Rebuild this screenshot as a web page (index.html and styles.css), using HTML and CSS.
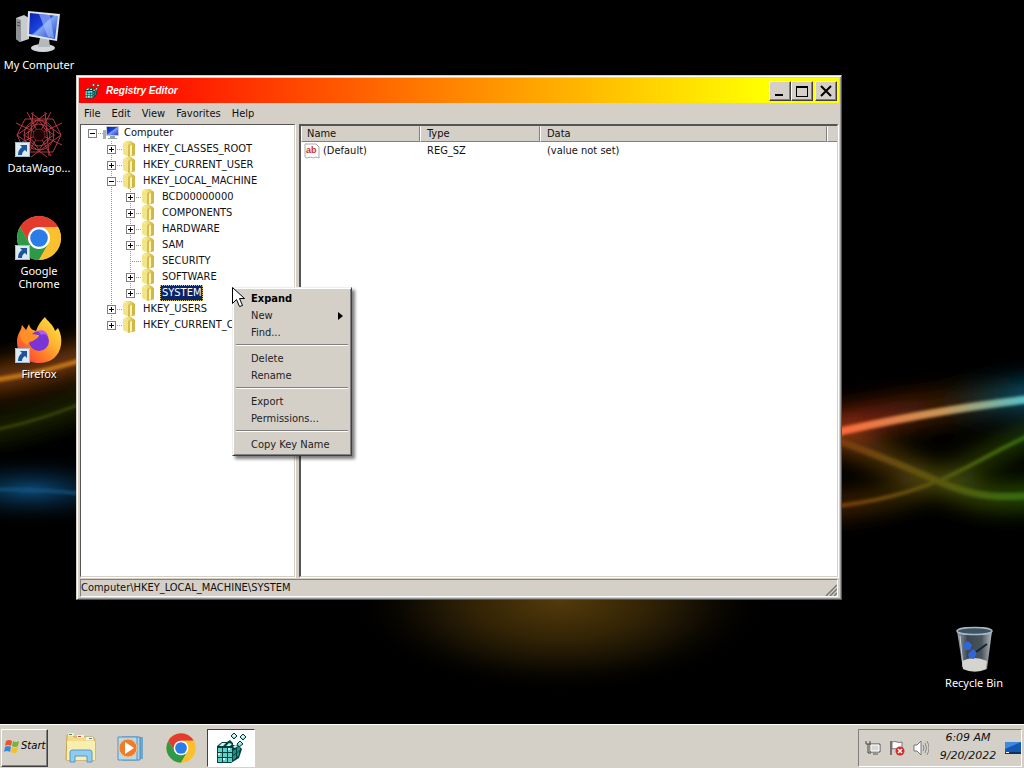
FILE: index.html
```html
<!DOCTYPE html>
<html lang="en">
<head>
	<meta charset="utf-8">
	<title>Registry Editor</title>
	<link rel="stylesheet" href="styles.css">
</head>
<body>

	<!-- shared drawings -->
	<svg class="defs" width="0" height="0">
		<defs>
			<linearGradient id="gold"><stop offset="0" stop-color="#fff6a8"/><stop offset=".5" stop-color="#f0dc6e"/><stop offset="1" stop-color="#c9a936"/></linearGradient>
			<linearGradient id="blue" x2="1" y2="1"><stop offset="0" stop-color="#0a1fae"/><stop offset=".45" stop-color="#1c43e0"/><stop offset=".5" stop-color="#7fa4f5"/><stop offset="1" stop-color="#1a3fd0"/></linearGradient>
			<linearGradient id="flame" x1="1" x2="0" y2="1"><stop offset="0" stop-color="#fff04a"/><stop offset=".4" stop-color="#ffb02e"/><stop offset=".7" stop-color="#ff6a2a"/><stop offset="1" stop-color="#f0256a"/></linearGradient>
			<linearGradient id="glass"><stop offset="0" stop-color="#9aa4ac"/><stop offset=".3" stop-color="#3c464e"/><stop offset=".7" stop-color="#4a545c"/><stop offset="1" stop-color="#b4bcc2"/></linearGradient>
		</defs>
		<symbol id="folder" viewBox="0 0 16 16">
			<path d="M1 2l2-2h6l4 3v11l-6 2-6-3z" fill="url(#gold)"/>
			<path d="M1 2l5 2v11l-5-2z" fill="#f3e48c"/>
			<path d="M6 4l2-1v12l-2 1z" fill="#d8bd4e"/>
			<path d="M8 5l2-1v10l-2 1z" fill="#fff6b4"/>
			<path d="M10 4l3-1v11l-3 1z" fill="#d3b648"/>
		</symbol>
		<symbol id="chrome" viewBox="0 0 48 48">
			<circle cx="24" cy="24" r="22" fill="#fbc02d"/>
			<path d="M5 13A22 22 0 0 1 43.100 13H24L14.500 29.500z" fill="#e33b2e"/>
			<path d="M5 13A22 22 0 0 0 24 46L33.500 29.500H14.500z" fill="#2e9a47"/>
			<path d="M24 13h19A22 22 0 0 1 24 46l9.500-16.500z" fill="#fbc02d"/>
			<circle cx="24" cy="24" r="11" fill="#fff"/>
			<circle cx="24" cy="24" r="8.800" fill="#2a7de9"/>
		</symbol>
		<symbol id="shortcut" viewBox="0 0 15 15">
			<path d="M0 0h15v15H0z" fill="#dde9f3"/>
			<path d="M.5.5h14v14H.5z" fill="none" stroke="#a9b9c8"/>
			<path d="M5 3h7v7l-2-2c-2 1-3 3-3 5H3c0-3 1-6 4-8z" fill="#1d549c"/>
		</symbol>
		<symbol id="regedit" viewBox="0 0 32 32">
			<path d="M2 14l5-4h5l3-2 3 3v2h5l4 4-3 9-8 5H2z" fill="#08403e"/>
			<g fill="#5fd0c8">
				<path d="M3 16h4v4H3zM8 16h4v4H8zM13 16h4v4h-4zM3 21h4v4H3zM8 21h4v4H8zM13 21h4v4h-4zM3 26h4v4H3zM8 26h4v4H8zM13 26h4v4h-4z"/>
				<path d="M18 19l3-2v4l-3 2zM22 16l3-2v4l-3 2zM18 24l3-2v4l-3 2zM22 21l2-2v4l-2 2z" fill="#1f8f88"/>
			</g>
			<g fill="#c8f5f0"><path d="M4 14l3-3h4l-3 3zM11 14l3-3 3 1-2 2zM3 21h2v2H3zM8 26h2v2H8zM13 16h2v2h-2zM18 15l2-2 3 1-3 2z"/></g>
			<g stroke="#063634" stroke-width="1" fill="#7fe0d8">
				<path d="M19 1l3 3-3 3-3-3zM28 2l3 3-3 3-3-3zM25 9l3 3-4 3-2-3z"/>
			</g>
			<path d="M19 2l2 2-2 1-2-1zM28 3l2 2-2 1-2-1zM25 10l1 1-2 1z" fill="#e4fffc"/>
		</symbol>
		<symbol id="monitor" viewBox="0 0 16 16">
			<path d="M0 5h3v9H0z" fill="#a8adb2"/>
			<path d="M3 1h13v10H3z" fill="#c5cad2"/>
			<path d="M4 2h11v8H4z" fill="url(#blue)"/>
			<path d="M7 11h5v2h2v1H5v-1h2z" fill="#9aa0a8"/>
		</symbol>
	</svg>

	<main class="desktop">
		<svg class="wallpaper" viewBox="0 0 1024 724" preserveAspectRatio="none">
			<defs>
				<filter id="soft" x="-20%" y="-80%" width="140%" height="260%"><feGaussianBlur stdDeviation="12"/></filter>
				<filter id="fine" x="-20%" y="-50%" width="140%" height="200%"><feGaussianBlur stdDeviation="1.500"/></filter>
				<radialGradient id="amber"><stop offset="0" stop-color="#543a0a"/><stop offset=".4" stop-color="#332406"/><stop offset=".7" stop-color="#120d03"/><stop offset="1" stop-color="#000" stop-opacity="0"/></radialGradient>
				<radialGradient id="navy"><stop offset="0" stop-color="#0b4a78"/><stop offset="1" stop-color="#000" stop-opacity="0"/></radialGradient>
				<linearGradient id="ray" gradientUnits="userSpaceOnUse" x1="842" x2="1024"><stop offset="0" stop-color="#fb6a3c"/><stop offset=".55" stop-color="#c79555"/><stop offset="1" stop-color="#58bfc4"/></linearGradient>
				<linearGradient id="rayglow" gradientUnits="userSpaceOnUse" x1="842" x2="1024"><stop offset="0" stop-color="#a02a08"/><stop offset=".6" stop-color="#3a2206"/><stop offset="1" stop-color="#065a74"/></linearGradient>
				<linearGradient id="moss" gradientUnits="userSpaceOnUse" x1="842" x2="1024"><stop offset="0" stop-color="#7a3c08"/><stop offset=".5" stop-color="#5c5608"/><stop offset="1" stop-color="#346c0a"/></linearGradient>
			</defs>
			<path d="M0 0h1024v724H0z"/>
			<ellipse cx="560" cy="600" rx="210" ry="95" fill="url(#amber)"/>
			<ellipse cx="30" cy="490" rx="130" ry="38" fill="url(#navy)"/>
			<g fill="none">
				<g filter="url(#soft)">
					<path d="M-20 382Q40 372 100 352" stroke="#8a4408" stroke-width="24"/>
					<path d="M-20 432Q40 422 100 396" stroke="#2c3806" stroke-width="16"/>
					<path d="M820 430Q940 404 1050 392" stroke="url(#rayglow)" stroke-width="26"/>
					<path d="M820 432C880 455 900 465 940 482S1000 500 1050 494" stroke="url(#moss)" stroke-width="18"/>
					<path d="M820 508C880 502 910 492 940 480S990 452 1050 426" stroke="url(#moss)" stroke-width="12"/>
				</g>
				<g filter="url(#fine)">
					<path d="M-20 382Q40 375 100 354" stroke="#c27414" stroke-width="5"/>
					<path d="M-20 433Q40 422 100 396" stroke="#465010" stroke-width="2"/>
					<path d="M-20 490Q40 488 100 496" stroke="#125078" stroke-width="3"/>
					<path d="M820 436Q940 408 1050 397" stroke="url(#ray)" stroke-width="8"/>
					<path d="M820 434C880 455 900 465 940 482S1000 498 1050 495" stroke="url(#moss)" stroke-width="7"/>
					<path d="M820 508C880 502 910 492 940 480S990 452 1050 426" stroke="url(#moss)" stroke-width="4"/>
				</g>
			</g>
		</svg>

		<div class="icons">
			<button class="shortcut">
				<svg viewBox="0 0 48 48">
					<path d="M1 10l8-3 5 3v21l-9 3-4-3z" fill="#c9cccd"/>
					<path d="M1 10l5 2v22l-5-3z" fill="#8e9294"/>
					<path d="M2 14l3 1M2 17l3 1" stroke="#444"/>
					<ellipse cx="28" cy="40" rx="12" ry="4" fill="#d4d7d9"/>
					<path d="M25 30h9l1 9H23z" fill="#b4b9bc"/>
					<path d="M13 3l32 3-3 27-30-5z" fill="#dfe3e6"/>
					<path d="M15 5l28 3-3 23-26-5z" fill="url(#blue)"/>
					<path d="M24 6l11 1 4 23-6-1z" fill="#a9c3fb" opacity=".6"/>
				</svg>
				<span>My Computer</span>
			</button>
			<button class="shortcut">
				<svg viewBox="0 0 48 48">
					<g fill="none" stroke="#b23a42" stroke-width="1">
						<path d="M12 1l24 44M36 1L12 45M1 12l46 22M1 34l46-22M18 1l-4 44M30 1l4 44M2 24l30-22M2 24l30 22M46 24L16 2M46 24L16 46"/>
						<path d="M10 8h28l8 16-8 17H10L2 24z"/>
						<circle cx="24" cy="24" r="11"/><circle cx="24" cy="24" r="15"/>
						<path d="M24 9l6 9 9 6-9 6-6 9-6-9-9-6 9-6z"/>
					</g>
					<circle cx="24" cy="24" r="6" fill="#1c0406" stroke="#7c2026"/>
					<use href="#shortcut" x="0" y="31" width="15" height="15"/>
				</svg>
				<span>DataWago...</span>
			</button>
			<button class="shortcut">
				<svg viewBox="0 0 48 48">
					<use href="#chrome" width="48" height="48"/>
					<use href="#shortcut" x="0" y="31" width="15" height="15"/>
				</svg>
				<span>Google Chrome</span>
			</button>
			<button class="shortcut">
				<svg viewBox="0 0 48 48">
					<path d="M30 0c2 4 8 7 10 14l3-3c4 7 4 15 2 21-3 9-11 14-21 14C11 46 2 37 2 25c0-6 2-9 4-13l1-4 4 5 3-6c1 4 3 6 7 7 2-6 5-10 9-14z" fill="url(#flame)"/>
					<circle cx="24" cy="24" r="10" fill="#7a35d8"/>
					<path d="M23 14c5-2 9 1 10 5-3-2-6-2-7-1z" fill="#b05cf0"/>
					<path d="M5 15c5-3 9-1 12 2l7 1c0 3-4 4-6 6-3 1-5 1-6 4-4-2-7-6-7-13z" fill="#ff8f26"/>
					<use href="#shortcut" x="0" y="31" width="15" height="15"/>
				</svg>
				<span>Firefox</span>
			</button>
		</div>

		<button class="shortcut bin">
			<svg viewBox="0 0 48 48">
				<path d="M7 5h35l-5 38q-12 6-24 0z" fill="url(#glass)"/>
				<ellipse cx="24.500" cy="5" rx="17.500" ry="3.500" fill="#3d5262" stroke="#a9b8c2" stroke-width="1.500"/>
				<path d="M12 35q12-6 25 0l-1 8q-11 5-23 0z" fill="#d5d5d0"/>
				<path d="M13 18l5-3 4 4-2 5h-5zM18 28l5-5 4 4-3 6-5-1z" fill="#2f66d8"/>
				<path d="M26 26l11-8" stroke="#18222c" stroke-width="2"/>
				<path d="M10 10l3 31" stroke="#c7d0d6" stroke-width="1"/>
			</svg>
			<span>Recycle Bin</span>
		</button>

		<section class="window">
			<header class="titlebar">
				<svg class="icon16"><use href="#regedit"/></svg>
				<h1>Registry Editor</h1>
				<button class="caption" aria-label="Minimize"><svg viewBox="0 0 14 12"><path d="M2 9h8v2H2z"/></svg></button>
				<button class="caption" aria-label="Maximize"><svg viewBox="0 0 14 12"><path d="M1 1h12v11H1zM2 3v8h10V3z" fill-rule="evenodd"/></svg></button>
				<button class="caption close" aria-label="Close"><svg viewBox="0 0 14 12"><path d="M2 1l10 10M12 1L2 11" stroke="#000" stroke-width="2"/></svg></button>
			</header>

			<nav class="menubar">
				<button>File</button>
				<button>Edit</button>
				<button>View</button>
				<button>Favorites</button>
				<button>Help</button>
			</nav>

			<div class="panes">
				<div class="pane tree-pane">
					<ul class="tree">
						<li>
							<div class="node"><span class="joint"><button class="toggle open" aria-label="Collapse"></button></span><svg class="icon16"><use href="#monitor"/></svg><span class="name">Computer</span></div>
							<ul>
								<li><div class="node"><span class="joint"><button class="toggle" aria-label="Expand"></button></span><svg class="icon16"><use href="#folder"/></svg><span class="name">HKEY_CLASSES_ROOT</span></div></li>
								<li><div class="node"><span class="joint"><button class="toggle" aria-label="Expand"></button></span><svg class="icon16"><use href="#folder"/></svg><span class="name">HKEY_CURRENT_USER</span></div></li>
								<li>
									<div class="node"><span class="joint"><button class="toggle open" aria-label="Collapse"></button></span><svg class="icon16"><use href="#folder"/></svg><span class="name">HKEY_LOCAL_MACHINE</span></div>
									<ul>
										<li><div class="node"><span class="joint"><button class="toggle" aria-label="Expand"></button></span><svg class="icon16"><use href="#folder"/></svg><span class="name">BCD00000000</span></div></li>
										<li><div class="node"><span class="joint"><button class="toggle" aria-label="Expand"></button></span><svg class="icon16"><use href="#folder"/></svg><span class="name">COMPONENTS</span></div></li>
										<li><div class="node"><span class="joint"><button class="toggle" aria-label="Expand"></button></span><svg class="icon16"><use href="#folder"/></svg><span class="name">HARDWARE</span></div></li>
										<li><div class="node"><span class="joint"><button class="toggle" aria-label="Expand"></button></span><svg class="icon16"><use href="#folder"/></svg><span class="name">SAM</span></div></li>
										<li><div class="node"><span class="joint"></span><svg class="icon16"><use href="#folder"/></svg><span class="name">SECURITY</span></div></li>
										<li><div class="node"><span class="joint"><button class="toggle" aria-label="Expand"></button></span><svg class="icon16"><use href="#folder"/></svg><span class="name">SOFTWARE</span></div></li>
										<li><div class="node"><span class="joint"><button class="toggle" aria-label="Expand"></button></span><svg class="icon16"><use href="#folder"/></svg><span class="name selected">SYSTEM</span></div></li>
									</ul>
								</li>
								<li><div class="node"><span class="joint"><button class="toggle" aria-label="Expand"></button></span><svg class="icon16"><use href="#folder"/></svg><span class="name">HKEY_USERS</span></div></li>
								<li><div class="node"><span class="joint"><button class="toggle" aria-label="Expand"></button></span><svg class="icon16"><use href="#folder"/></svg><span class="name">HKEY_CURRENT_CONFIG</span></div></li>
							</ul>
						</li>
					</ul>
				</div>

				<div class="pane values-pane">
					<table class="values">
						<thead>
							<tr><th class="col-name">Name</th><th class="col-type">Type</th><th>Data</th><th class="col-rest"></th></tr>
						</thead>
						<tbody>
							<tr>
								<td><span class="value"><svg class="icon16" viewBox="0 0 16 16"><path d="M1 1h11l3 3v11l-3-1-3 1-3-1-3 1-2-1z" fill="#fff" stroke="#aaa"/><text x="2" y="10" class="ab">ab</text></svg>(Default)</span></td>
								<td>REG_SZ</td>
								<td>(value not set)</td>
								<td></td>
							</tr>
						</tbody>
					</table>
				</div>
			</div>

			<footer class="status">
				<span>Computer\HKEY_LOCAL_MACHINE\SYSTEM</span>
				<svg class="grip" viewBox="0 0 12 12"><path d="M1 12L12 1M5 12l7-7M9 12l3-3" stroke="#777" stroke-width="1.500"/></svg>
			</footer>
		</section>

		<div class="context">
			<button class="default">Expand</button>
			<button>New<svg viewBox="0 0 5 8"><path d="M0 0l5 4-5 4z"/></svg></button>
			<button>Find...</button>
			<hr>
			<button>Delete</button>
			<button>Rename</button>
			<hr>
			<button>Export</button>
			<button>Permissions...</button>
			<hr>
			<button>Copy Key Name</button>
		</div>

		<svg class="cursor" viewBox="0 0 13 21"><path d="M.5.5v16l4-4 3 7 3-1-3-7h5z" fill="#fff" stroke="#000"/></svg>
	</main>

	<footer class="taskbar">
		<button class="start">
			<svg viewBox="0 0 16 16">
				<path d="M2 3q3-2 6 0L7 8Q4 6 1 8z" fill="#e8542c"/>
				<path d="M9 3q3 2 6 0l-1 5q-3 2-6 0z" fill="#77b43c"/>
				<path d="M1 9q3-2 6 0l-1 5q-3-2-6 0z" fill="#3a86d8"/>
				<path d="M8 9q3 2 6 0l-1 5q-3 2-6 0z" fill="#f5bf2a"/>
			</svg>
			Start
		</button>
		<button class="task" aria-label="Explorer">
			<svg viewBox="0 0 32 32">
				<path d="M2 3h6l1 2h19l2 3v20H1z" fill="#f0dc86" stroke="#c2a548"/>
				<path d="M3 1h6v3H3z" fill="#e6efe0"/><path d="M4 2h3v1H4z" fill="#3f9a3f"/>
				<path d="M12 3h7v3h-7z" fill="#f3f3ee"/><path d="M13 4h3v1h-3z" fill="#d84030"/>
				<path d="M21 5h7v3h-7z" fill="#f3f3ee"/><path d="M24 6h3v1h-3z" fill="#3a80d0"/>
				<path d="M2 9h28v19H2z" fill="#f9eeb0"/>
				<path d="M5 30V20q0-2 3-2h16q3 0 3 2v10h-5v-6H10v6z" fill="#8fcdf0" stroke="#5298c8"/>
			</svg>
		</button>
		<button class="task" aria-label="Media Player">
			<svg viewBox="0 0 32 32">
				<path d="M10 5h18v22H10z" fill="#6fa8cc"/>
				<path d="M7 5h18v23H7z" fill="#a9d2ea" stroke="#4f8cb4"/>
				<path d="M3 5h19v23H3z" fill="#b7d9ec" stroke="#5b93b8"/>
				<circle cx="13" cy="16" r="9" fill="#ee7c28" stroke="#f8c090"/>
				<path d="M10 10l9 6-9 6z" fill="#fff"/>
			</svg>
		</button>
		<button class="task" aria-label="Chrome"><svg><use href="#chrome"/></svg></button>
		<button class="task active" aria-label="Registry Editor"><svg><use href="#regedit"/></svg></button>

		<div class="tray">
			<svg viewBox="0 0 16 16"><path d="M5 4h10v8H5zM8 14h5" fill="#d8d8d4" stroke="#555"/><path d="M6 5h8v6H6z" fill="none" stroke="#fff"/><path d="M1 1v3h4V1M3 4v9h3" fill="none" stroke="#444"/></svg>
			<svg viewBox="0 0 16 16"><path d="M2 1v14" stroke="#555" stroke-width="1.500"/><path d="M3 2q3-1 5 0t5 0v7q-3 1-5 0t-5 0z" fill="#fff" stroke="#777"/><circle cx="11" cy="11" r="4.500" fill="#d22c2c"/><path d="M9 9l4 4M13 9l-4 4" stroke="#fff" stroke-width="1.500"/></svg>
			<svg viewBox="0 0 16 16"><path d="M1 5h3l4-4v14l-4-4H1z" fill="#fff" stroke="#777"/><path d="M10 5q2 3 0 6M12 3q3 5 0 10M14 1q4 7 0 14" fill="none" stroke="#888"/></svg>
			<div class="clock"><span>6:09 AM</span><span>9/20/2022</span></div>
			<svg viewBox="0 0 16 16"><path d="M0 2h16v10H0z" fill="#1558b4"/><path d="M0 2h16L0 9z" fill="#3f8ae0"/><path d="M0 12h16v2H0z" fill="#12305c"/><path d="M1 12h3v1H1z" fill="#fff"/></svg>
		</div>
	</footer>

</body>
</html>
```
FILE: styles.css
```css
*{
	box-sizing: border-box;
}
body{
	margin: 0;
	height: 100vh;
	display: flex;
	flex-direction: column;
	overflow: hidden;
	background: #000;
	color: #111;
	font: 11px/16px "DejaVu Sans Condensed", "DejaVu Sans", sans-serif;
}
button{
	margin: 0;
	padding: 0;
	border: 0;
	background: none;
	color: inherit;
	font: inherit;
}
svg{
	display: block;
	flex: none;
}
ul{
	list-style: none;
	margin: 0;
	padding: 0;
}
.defs{
	position: absolute;
}
.icon16{
	width: 16px;
	height: 16px;
}

/* desktop */
.desktop{
	position: relative;
	flex: 1;
}
.wallpaper{
	position: absolute;
	width: 100%;
	height: 100%;
}
.icons{
	position: relative;
	width: 78px;
	padding-top: 8px;
}
.shortcut{
	display: flex;
	flex-direction: column;
	align-items: center;
	width: 78px;
	height: 103px;
	color: #fff;
	font: 11px/13px "Noto Sans", sans-serif;
	text-shadow: 1px 1px 1px #000;
}
.shortcut svg{
	width: 48px;
	height: 48px;
	margin-bottom: 2px;
}
.shortcut span{
	max-width: 72px;
}
.bin{
	position: absolute;
	right: 11px;
	bottom: -5px;
}

/* window */
.window{
	position: absolute;
	top: 75px;
	right: 182px;
	bottom: 124px;
	left: 76px;
	display: flex;
	flex-direction: column;
	padding: 2px;
	background: #d4d0c8;
	border: 1px solid;
	border-color: #d4d0c8 #555 #555 #d4d0c8;
	box-shadow: inset 1px 1px #fff, inset -1px -1px #999;
}
.titlebar{
	display: flex;
	align-items: center;
	height: 25px;
	padding: 0 2px 0 5px;
	background: linear-gradient(90deg, #f00 5%, #ff0 90%);
}
.titlebar h1{
	flex: 1;
	margin: 0 0 0 6px;
	color: #fff;
	font: italic bold 10px/16px "Liberation Sans", sans-serif;
}
.caption{
	display: flex;
	align-items: center;
	justify-content: center;
	width: 22px;
	height: 20px;
	background: #d4d0c8;
	border: 1px solid;
	border-color: #fff #404040 #404040 #fff;
	box-shadow: inset -1px -1px #808080;
}
.caption svg{
	width: 14px;
	height: 12px;
}
.close{
	margin-left: 2px;
}
.menubar{
	display: flex;
	gap: 11px;
	height: 21px;
	padding-left: 5px;
}
.panes{
	flex: 1;
	display: flex;
	gap: 4px;
	min-height: 0;
	padding: 0 1px;
}
.pane{
	overflow: hidden;
	background: #fff;
	border: 1px solid;
	border-color: #555 #d4d0c8 #d4d0c8 #555;
	box-shadow: 1px 1px #fff;
}
.tree-pane{
	width: 215px;
	padding-left: 3px;
}
.values-pane{
	flex: 1;
	border-width: 2px 1px 1px 2px;
}

/* tree, the dotted lines are tiled gradients */
.tree ul{
	padding-left: 19px;
}
.tree ul li{
	background: linear-gradient(#999 50%, transparent 50%) 8px 0 / 1px 2px repeat-y;
}
.tree ul li:last-child{
	background-repeat: no-repeat;
	background-image: repeating-linear-gradient(#999 0 1px, transparent 1px 2px);
	background-size: 1px 8px;
}
.node{
	display: flex;
	height: 16px;
	white-space: nowrap;
}
.joint{
	width: 19px;
	padding: 4px;
	background: repeating-linear-gradient(90deg, #999 0 1px, transparent 1px 2px) 8px 8px / 11px 1px no-repeat;
}
.toggle{
	display: block;
	width: 9px;
	height: 9px;
	border: 1px solid #808080;
	background: linear-gradient(#000, #000) center / 5px 1px no-repeat, linear-gradient(#000, #000) center / 1px 5px no-repeat, #fff;
}
.toggle.open{
	background: linear-gradient(#000, #000) center / 5px 1px no-repeat, #fff;
}
.name{
	margin-left: 3px;
	padding: 0 2px;
}
.selected{
	background: #0a246a;
	color: #fff;
	outline: 1px dotted #d8c070;
	outline-offset: -1px;
}

/* values */
.values{
	width: 100%;
	table-layout: fixed;
	border-collapse: separate;
	border-spacing: 0;
}
.values th{
	height: 16px;
	padding: 0 6px;
	line-height: 14px;
	text-align: left;
	font-weight: normal;
	background: #d4d0c8;
	border: 1px solid;
	border-color: #d4d0c8 #808080 #808080 #fff;
}
.values .col-name{
	width: 119px;
	padding-left: 5px;
}
.values .col-type{
	width: 120px;
}
.values .col-rest{
	width: 10px;
	padding: 0;
	border-right: 0;
}
.values td{
	height: 18px;
	padding: 0 7px;
}
.values td:first-child{
	padding: 0 3px;
}
.value{
	display: flex;
	gap: 3px;
}
.ab{
	fill: #c8321e;
	font: bold 9px "Liberation Sans", sans-serif;
}
.status{
	display: flex;
	justify-content: space-between;
	align-items: center;
	height: 18px;
	margin: 2px 1px 0;
	border: 1px solid;
	border-color: #808080 #fff #fff #808080;
}
.grip{
	align-self: flex-end;
	width: 12px;
	height: 12px;
}

/* popup menu */
.context{
	position: absolute;
	top: 287px;
	left: 232px;
	width: 120px;
	padding: 2px;
	background: #d4d0c8;
	border: 1px solid;
	border-color: #eee #404040 #404040 #eee;
	box-shadow: inset 1px 1px #fff, inset -1px -1px #808080, 3px 3px 3px rgba(0, 0, 0, .5);
}
.context button{
	display: flex;
	align-items: center;
	justify-content: space-between;
	width: 100%;
	height: 17px;
	padding: 0 6px 0 16px;
	color: #222;
}
.context .default{
	font-weight: bold;
	color: #000;
}
.context svg{
	width: 5px;
	height: 8px;
}
.context hr{
	height: 2px;
	margin: 3px 1px 4px;
	border: 0;
	border-top: 1px solid #808080;
	border-bottom: 1px solid #fff;
}
.cursor{
	position: absolute;
	top: 287px;
	left: 232px;
	width: 13px;
	height: 21px;
}

/* taskbar */
.taskbar{
	display: flex;
	align-items: center;
	gap: 2px;
	height: 44px;
	padding: 3px 2px 1px 1px;
	background: #d4d0c8;
	border-top: 1px solid #fff;
}
.start{
	display: flex;
	align-items: center;
	gap: 1px;
	width: 47px;
	height: 38px;
	margin-right: 7px;
	padding: 0 0 3px 2px;
	color: #000;
	font: italic 10px/16px "DejaVu Sans", sans-serif;
	border: 1px solid;
	border-color: #fff #404040 #404040 #fff;
	box-shadow: inset -1px -1px #808080;
}
.start svg{
	width: 16px;
	height: 16px;
}
.task{
	display: flex;
	align-items: center;
	justify-content: center;
	width: 48px;
	height: 38px;
}
.task svg{
	width: 32px;
	height: 32px;
}
.active{
	background: #fff;
	border: 1px solid;
	border-color: #404040 #fff #fff #404040;
}
.tray{
	display: flex;
	align-items: center;
	gap: 8px;
	height: 38px;
	margin-left: auto;
	padding-left: 6px;
	border: 1px solid;
	border-color: #808080 #fff #fff #808080;
}
.tray svg{
	width: 16px;
	height: 16px;
}
.clock{
	display: flex;
	flex-direction: column;
	align-items: center;
	width: 60px;
	margin: 0 -1px 2px 1px;
	line-height: 18px;
	font-family: "DejaVu Sans", sans-serif;
	font-style: italic;
}
```
